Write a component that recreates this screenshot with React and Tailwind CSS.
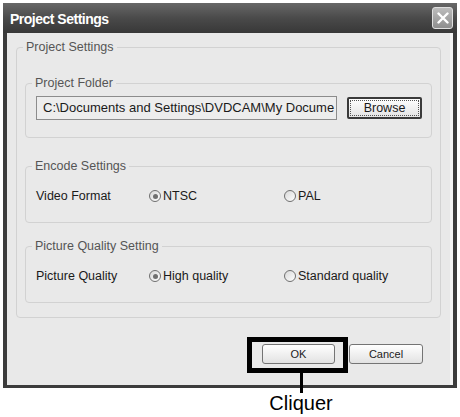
import React from "react";

function Radio({ checked, label }) {
  return (
    <div className="flex items-center">
      <div className="w-[12px] h-[12px] rounded-full border border-[#6f6f6f] bg-gradient-to-br from-[#d8d8d8] to-white flex items-center justify-center">
        {checked && <div className="w-[5px] h-[5px] rounded-full bg-[#707070]" />}
      </div>
      <span className="ml-[2px] text-[12.5px] text-[#1a1a1a]">{label}</span>
    </div>
  );
}

function Group({ title, className = "", bodyClass = "", children }) {
  return (
    <fieldset className={"border border-[#d2d2d2] rounded-[4px] " + className}>
      <legend className="ml-[6px] px-[3px] text-[12.5px] leading-[15px] text-[#555]">{title}</legend>
      <div className={bodyClass}>{children}</div>
    </fieldset>
  );
}

function OptionRow({ label, options }) {
  return (
    <div className="flex items-center h-[16px] pl-[10px]">
      <div className="w-[113px] text-[12.5px] text-[#1a1a1a]">{label}</div>
      <div className="w-[135px]">
        <Radio checked label={options[0]} />
      </div>
      <Radio label={options[1]} />
    </div>
  );
}

export default function App() {
  return (
    <div
      className="relative w-[460px] h-[417px] bg-white pt-[3px] pl-[3px]"
      style={{ fontFamily: '"Liberation Sans", Arial, sans-serif' }}
    >
      {/* window */}
      <div className="w-[454px] h-[385px] bg-[#3c3c3c] flex flex-col">
        <div className="h-[30px] flex items-center justify-between pl-[7px] pr-[4px] bg-gradient-to-b from-[#686868] via-[#4a4a4a] to-[#383838]">
          <span className="text-white font-bold text-[14px] tracking-[-0.5px] pt-[2px]">Project Settings</span>
          <div className="w-[21px] h-[22px] rounded-[3px] border border-[#e0e0e0] bg-gradient-to-b from-[#bdbdbd] to-[#8e8e8e] flex items-center justify-center">
            <svg width="12" height="12" viewBox="0 0 12 12">
              <path d="M1.5 1.5 L10.5 10.5 M10.5 1.5 L1.5 10.5" stroke="white" strokeWidth="2.4" strokeLinecap="round" />
            </svg>
          </div>
        </div>
        <div className="flex-1 mx-[4px] mb-[3px] bg-[#e9e9e9] border-r-[3px] border-[#f4f4f4] flex flex-col">
          <Group title="Project Settings" className="mt-[7px] mx-[9px]" bodyClass="px-[8px] pt-[21px] pb-[14px]">
            <Group title="Project Folder" bodyClass="pl-[10px] pr-[5px] pt-[5px] pb-[17px]">
              <div className="flex items-center">
                <div className="w-[301px] h-[24px] border border-[#8c8c8c] bg-[#ededed] pl-[6px] flex items-center overflow-hidden whitespace-nowrap text-[13px] text-[#1a1a1a]">
                  {"C:\\Documents and Settings\\DVDCAM\\My Docume"}
                </div>
                <div className="ml-[10px] w-[75px] h-[22px] rounded-[2px] border-2 border-[#3a3a3a] bg-gradient-to-b from-white to-[#e4e4e4] p-[1px]">
                  <div className="w-full h-full border border-dotted border-[#555] flex items-center justify-center text-[12.5px] text-[#1a1a1a]">
                    Browse
                  </div>
                </div>
              </div>
            </Group>
            <Group title="Encode Settings" className="mt-[21px]" bodyClass="pt-[14px] pb-[18px]">
              <OptionRow label="Video Format" options={["NTSC", "PAL"]} />
            </Group>
            <Group title="Picture Quality Setting" className="mt-[16px]" bodyClass="pt-[14px] pb-[18px]">
              <OptionRow label="Picture Quality" options={["High quality", "Standard quality"]} />
            </Group>
          </Group>
          <div className="flex justify-end gap-[14px] mt-[26px] pr-[27px]">
            <button className="w-[73px] h-[20px] rounded-[3px] border border-[#747474] bg-gradient-to-b from-white to-[#e2e2e2] text-[11px] text-[#222]">
              OK
            </button>
            <button className="w-[74px] h-[20px] rounded-[3px] border border-[#747474] bg-gradient-to-b from-white to-[#e2e2e2] text-[11px] text-[#222]">
              Cancel
            </button>
          </div>
        </div>
      </div>

      {/* annotation */}
      <div className="absolute left-[247px] top-[337px] w-[101px] h-[36px] border-[5px] border-black" />
      <div className="absolute left-[300px] top-[373px] w-[3px] h-[20px] bg-black" />
      <div className="absolute left-[251px] top-[392px] w-[100px] text-center text-[20px] leading-[22px] text-black">
        Cliquer
      </div>
    </div>
  );
}
